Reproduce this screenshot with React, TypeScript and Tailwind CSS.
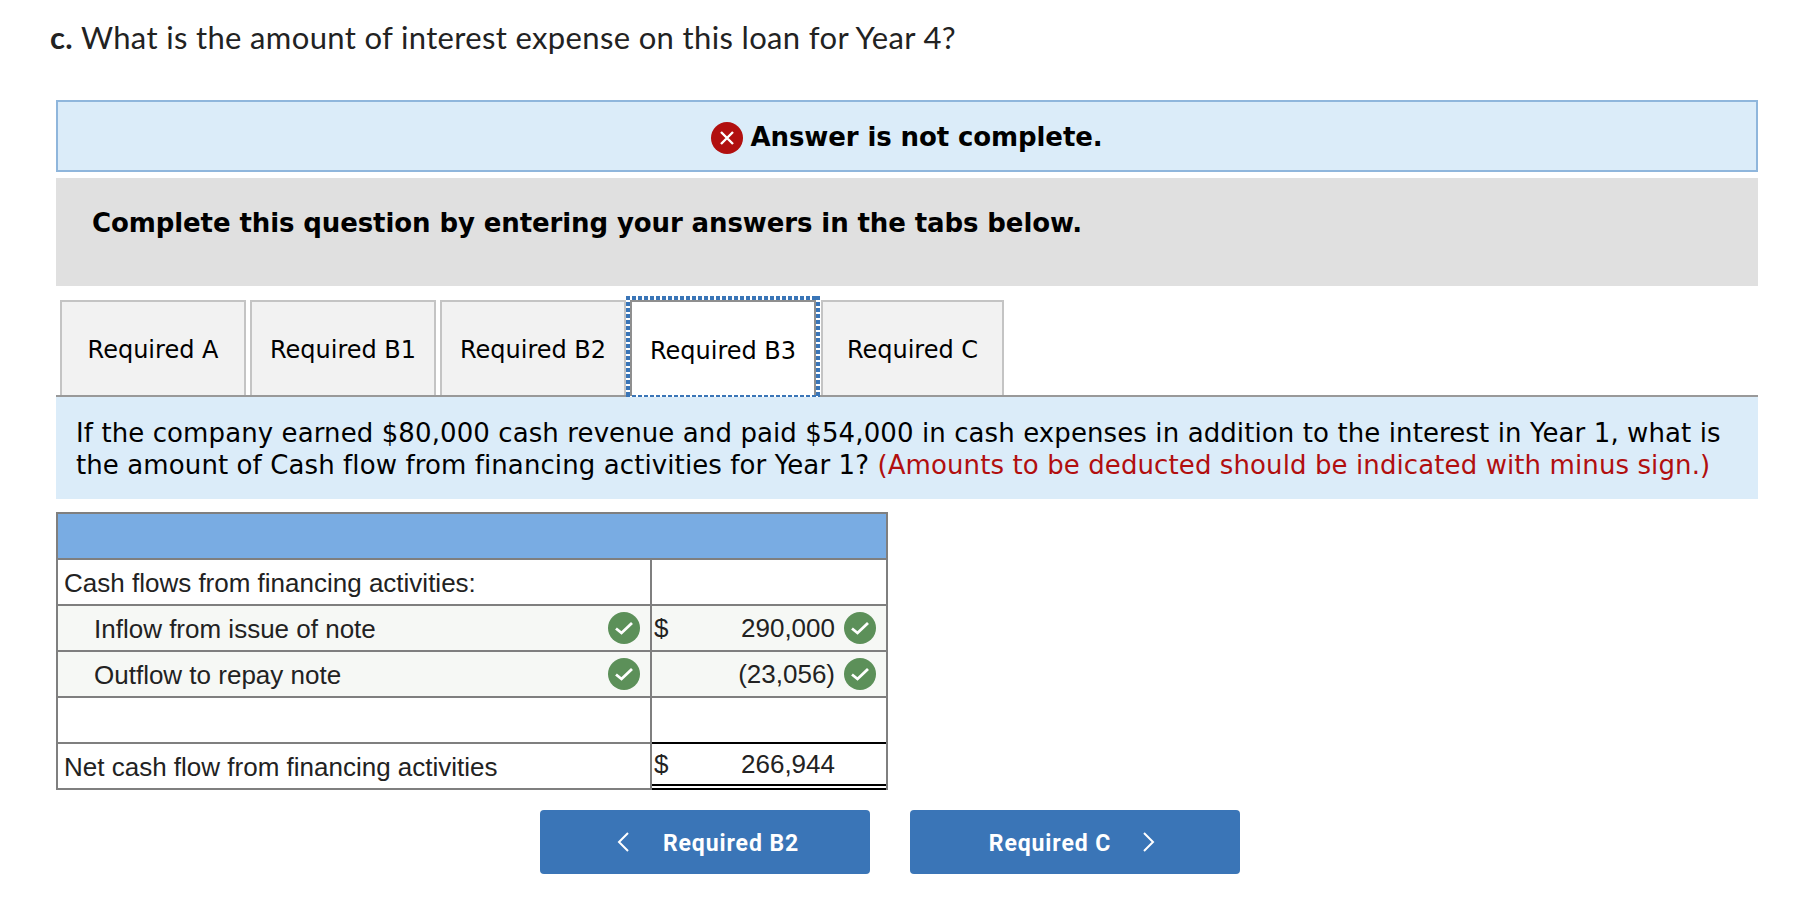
import React from 'react'

const verdana = "font-['DejaVu_Sans',sans-serif]"
const arial = "font-['Liberation_Sans',Arial,sans-serif]"

function CheckBadge() {
    return (
        <span className="w-8 h-8 rounded-full bg-[#5c9059] flex items-center justify-center shrink-0">
            <svg width="22" height="22" viewBox="0 0 22 22" fill="none">
                <path d="M3 11.5 L8.5 16 L19 6" stroke="#fff" strokeWidth="2.8" />
            </svg>
        </span>
    )
}

function ActiveTab({ label }: { label: string }) {
    return (
        <div className="relative z-10 w-[194px] h-[101px] -mt-[4px] -mb-[2px] -ml-[4px] -mr-[3px] bg-white pl-[4px] pr-[4px] pt-[4px] pb-[1px]">
            {/* dotted focus outline */}
            <span className="absolute left-0 right-0 top-0 h-[4px] bg-[repeating-linear-gradient(90deg,#3a75b7_0_4px,transparent_4px_6px)]" />
            <span className="absolute left-0 top-0 bottom-0 w-[4px] bg-[repeating-linear-gradient(180deg,#3a75b7_0_4px,transparent_4px_6px)]" />
            <span className="absolute right-0 top-0 bottom-0 w-[4px] bg-[repeating-linear-gradient(180deg,#3a75b7_0_4px,transparent_4px_6px)]" />
            <span className="absolute left-0 right-0 bottom-0 h-[2px] bg-[repeating-linear-gradient(90deg,#3a75b7_0_4px,transparent_4px_6px)]" />
            <div className="h-full border-x-2 border-t-2 border-[#8f8f8f] flex items-center justify-center pt-[3px] text-[24px] text-black">{label}</div>
        </div>
    )
}

function Tab({ label, narrow }: { label: string; narrow?: boolean }) {
    return (
        <div className={`${narrow ? 'w-[183px]' : 'w-[186px]'} h-[95px] border-x-2 border-t-2 border-[#c4c4c4] bg-[#f2f2f2] flex items-center justify-center pt-[3px] text-[24px] text-black`}>
            {label}
        </div>
    )
}

function Row({ label, indent, tint, check, dollar, amount, amountCheck, total }: {
    label?: string
    indent?: boolean
    tint?: boolean
    check?: boolean
    dollar?: boolean
    amount?: string
    amountCheck?: boolean
    total?: boolean
}) {
    return (
        <div className={`flex h-[46px] border-b-2 border-[#7f7f7f] ${tint ? 'bg-[#f6f8f5]' : 'bg-white'}`}>
            <div className={`w-[594px] shrink-0 flex items-center justify-between border-r-2 border-[#7f7f7f] pr-[10px] ${indent ? 'pl-[36px]' : 'pl-[6px]'}`}>
                <span className="pt-[2px]">{label}</span>
                {check && <CheckBadge />}
            </div>
            <div className={`flex-1 flex items-center pl-[2px] pr-[10px] ${total ? '-mt-[2px] -mb-[2px] border-t-2 border-t-black border-b-[6px] border-b-black [border-bottom-style:double]' : ''}`}>
                <span className="w-[20px]">{dollar ? '$' : ''}</span>
                <span className="flex-1 text-right">{amount}</span>
                <span className="w-[41px] flex justify-end shrink-0">{amountCheck && <CheckBadge />}</span>
            </div>
        </div>
    )
}

export default function App() {
    return (
        <div className="w-[1808px] h-[898px] bg-white overflow-hidden">
            <p className="pl-[50px] pt-[19px] h-[100px] text-[31px] tracking-[0.35px] leading-[36px] text-[#222] font-['Lato',sans-serif]">
                <b>c.</b> What is the amount of interest expense on this loan for Year 4?
            </p>

            <div className={`ml-[56px] mr-[50px] ${verdana}`}>
                <div className="h-[72px] border-2 border-[#8fb6dc] bg-[#dbecf9] flex items-center justify-center gap-[7px] pt-[2px] font-bold text-[26px] tracking-[-0.1px] text-black">
                    <span className="w-8 h-8 mt-[2px] rounded-full bg-[#b10f0f] flex items-center justify-center">
                        <svg width="18" height="18" viewBox="0 0 18 18"><path d="M3 3 L15 15 M15 3 L3 15" stroke="#fff" strokeWidth="2.4" /></svg>
                    </span>
                    Answer is not complete.
                </div>

                <div className="mt-[6px] h-[108px] bg-[#e0e0e0] pl-[36px] pt-[27px] font-bold text-[26px] tracking-[-0.1px] leading-[36px] text-black">
                    Complete this question by entering your answers in the tabs below.
                </div>

                <div className="mt-[14px] pl-[4px] flex gap-[4px] h-[95px] border-b-2 border-[#999] box-content">
                    <Tab label="Required A" />
                    <Tab label="Required B1" />
                    <Tab label="Required B2" />
                    <ActiveTab label="Required B3" />
                    <Tab label="Required C" narrow />
                </div>

                <div className="h-[102px] bg-[#dbecf9] px-[20px] pt-[20px] text-[26px] tracking-[0.1px] leading-[32px] text-black">
                    If the company earned $80,000 cash revenue and paid $54,000 in cash expenses in addition to the interest in Year 1, what is the amount of Cash flow from financing activities for Year 1? <span className="text-[#b10f0f]">(Amounts to be deducted should be indicated with minus sign.)</span>
                </div>

                <div className={`mt-[13px] w-[832px] border-x-2 border-t-2 border-[#7f7f7f] text-[26px] text-[#222] ${arial}`}>
                    <div className="h-[46px] bg-[#79ace3] border-b-2 border-[#7f7f7f]" />
                    <Row label="Cash flows from financing activities:" />
                    <Row label="Inflow from issue of note" indent tint check dollar amount="290,000" amountCheck />
                    <Row label="Outflow to repay note" indent tint check amount="(23,056)" amountCheck />
                    <Row />
                    <Row label="Net cash flow from financing activities" dollar amount="266,944" total />
                </div>

                <div className="mt-[20px] ml-[484px] flex gap-[40px] font-['Roboto',sans-serif] font-bold text-[23px] tracking-[0.9px] text-white">
                    <button className="w-[330px] h-[64px] rounded bg-[#3a75b7] pl-[5px] flex items-center justify-center gap-[33px]">
                        <svg width="14" height="22" viewBox="0 0 14 22" fill="none"><path d="M12 2 L3 11 L12 20" stroke="#fff" strokeWidth="2" /></svg>
                        <span className="pt-[5px]">Required B2</span>
                    </button>
                    <button className="w-[330px] h-[64px] rounded bg-[#3a75b7] pr-[5px] flex items-center justify-center gap-[31px]">
                        <span className="pt-[5px]">Required C</span>
                        <svg width="14" height="22" viewBox="0 0 14 22" fill="none"><path d="M2 2 L11 11 L2 20" stroke="#fff" strokeWidth="2" /></svg>
                    </button>
                </div>
            </div>
        </div>
    )
}
